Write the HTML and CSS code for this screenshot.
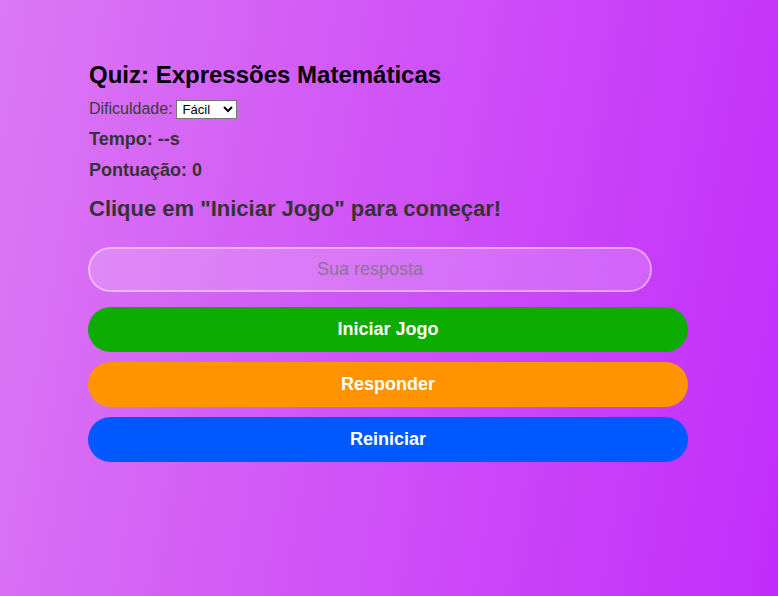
FILE: index.html
```html
<!DOCTYPE html>
<html lang="pt-BR">
<head>
<meta charset="UTF-8">
<title>Quiz: Expressões Matemáticas</title>
<link rel="stylesheet" href="styles.css">
</head>
<body>
  <main class="quiz">
    <h1 class="title">Quiz: Expressões Matemáticas</h1>
    <div class="difficulty">
      <label for="nivel">Dificuldade:</label>
      <select id="nivel" class="level-select">
        <option>Fácil</option>
        <option>Médio</option>
        <option>Difícil</option>
      </select>
    </div>
    <p class="stat stat-time">Tempo: --s</p>
    <p class="stat stat-score">Pontuação: 0</p>
    <h2 class="question">Clique em "Iniciar Jogo" para começar!</h2>
    <input class="answer" type="text" placeholder="Sua resposta">
    <button class="btn btn-start">Iniciar Jogo</button>
    <button class="btn btn-answer">Responder</button>
    <button class="btn btn-reset">Reiniciar</button>
  </main>
</body>
</html>
```
FILE: styles.css
```css
html, body {
  margin: 0;
  padding: 0;
}

body {
  min-height: 100vh;
  background: linear-gradient(100deg, #dc78f4 0%, #c22cfb 100%);
  font-family: "Liberation Sans", Arial, sans-serif;
  color: #333;
}

.quiz {
  width: 600px;
  margin-left: 88px;
  padding-top: 61px;
  display: flex;
  flex-direction: column;
  align-items: flex-start;
}

.title {
  margin: 0 0 0 1px;
  font-size: 24px;
  line-height: 28px;
  font-weight: bold;
  color: #000;
}

.difficulty {
  margin: 10px 0 0 1px;
  font-size: 16px;
  line-height: 20px;
  height: 20px;
  color: #3b3b3b;
  display: flex;
  align-items: center;
  gap: 3px;
}

.level-select {
  font-family: "Liberation Sans", Arial, sans-serif;
  font-size: 13px;
  height: 19px;
  width: 61px;
  margin: 0;
  padding: 0 0 0 2px;
  border: 1px solid #767676;
  border-radius: 0;
  background: #fff;
  color: #000;
}

.stat {
  margin: 9px 0 0 1px;
  font-size: 18px;
  line-height: 22px;
  font-weight: bold;
}

.question {
  margin: 15px 0 0 1px;
  font-size: 22px;
  line-height: 26px;
  font-weight: bold;
}

.answer {
  box-sizing: border-box;
  margin: 25px 0 0;
  width: 564px;
  height: 45px;
  padding: 0 15px;
  border: 2px solid rgba(255, 255, 255, 0.4);
  border-radius: 25px;
  background: rgba(255, 255, 255, 0.2);
  font-family: "Liberation Sans", Arial, sans-serif;
  font-size: 18px;
  text-align: center;
  color: #333;
  outline: none;
}

.answer::placeholder {
  color: #8a7590;
}

.btn {
  box-sizing: border-box;
  width: 600px;
  height: 45px;
  margin-top: 10px;
  border: none;
  border-radius: 25px;
  font-family: "Liberation Sans", Arial, sans-serif;
  font-size: 18px;
  font-weight: bold;
  color: #fff;
  cursor: pointer;
}

.btn-start {
  margin-top: 15px;
  background: #0cac00;
}

.btn-answer {
  background: #ff9400;
}

.btn-reset {
  background: #0059ff;
}
```
